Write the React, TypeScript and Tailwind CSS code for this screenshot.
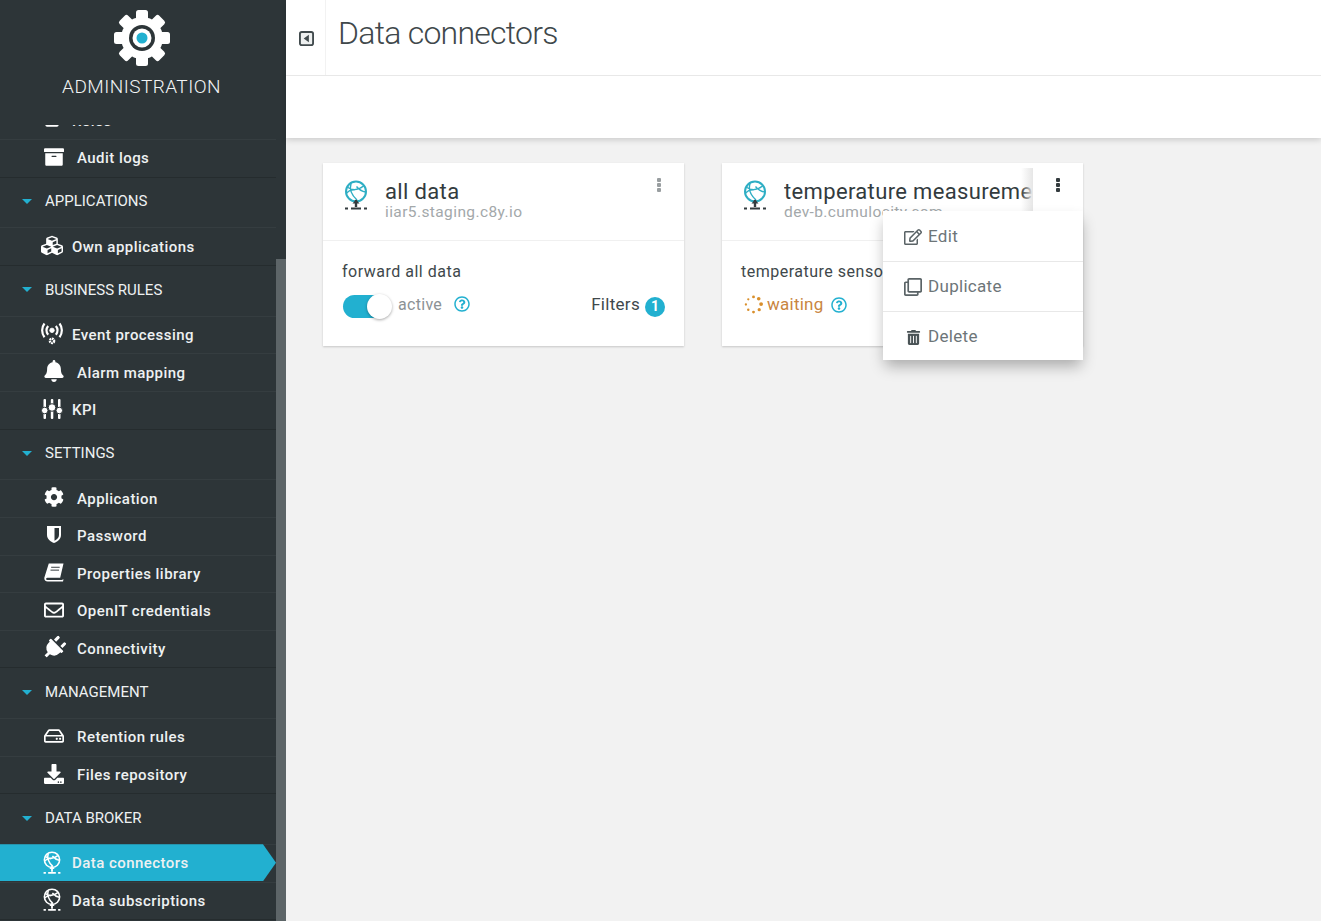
import React from 'react';
import {
  FaArchive,
  FaBell,
  FaCog,
  FaCubes,
  FaDownload,
  FaPlug,
  FaRegClone,
  FaRegEdit,
  FaRegEnvelope,
  FaRegHdd,
  FaRegQuestionCircle,
  FaTrashAlt,
  FaUsers,
} from 'react-icons/fa';

const GearLogo = () => (
  <svg viewBox="0 0 56 56" className="w-[56px] h-[56px]">
    <g fill="#fff">
      <circle cx="28" cy="28" r="21" />
      {[0, 45, 90, 135, 180, 225, 270, 315].map((a) => (
        <rect key={a} x="22" y="0" width="12" height="14" rx="2.5" transform={`rotate(${a} 28 28)`} />
      ))}
    </g>
    <circle cx="28" cy="28" r="13" fill="#2d3538" />
    <circle cx="28" cy="28" r="9.5" fill="#fff" />
    <circle cx="28" cy="28" r="5.5" fill="#22b0d0" />
  </svg>
);

const BrokerIcon = ({ className, color, base, weight = 1.4 }: { className?: string; color: string; base: string; weight?: number }) => (
  <svg viewBox="0 0 26 30" className={className} fill="none">
    <circle cx="13" cy="11.500" r="10" stroke={color} strokeWidth="2" />
    <path
      d="M4 7c5 3.500 11 3.500 16.500-1M8 3.500c-1.500 5 0 11 6 16.500M13.500 6.500c2.500 3 5.500 5 9 5.500M3.500 13c2-2 5-3.500 8-3"
      stroke={color}
      strokeWidth={weight}
    />
    <path d="M13 27v-7" stroke={base} strokeWidth="2.400" />
    <path d="M9.500 23.500 13 19.500l3.500 4z" fill={base} />
    <path d="M2 28.500h3M8 28.500h10M21 28.500h3" stroke={base} strokeWidth="2.200" />
  </svg>
);

const EventIcon = () => (
  <svg viewBox="0 0 24 24" className="w-[24px] h-[24px]" fill="none" stroke="#fff" strokeWidth="2.400">
    <circle cx="12" cy="8" r="2.400" fill="#fff" strokeWidth="1" />
    <path d="M7.800 12.800c-2.200-2.800-2.200-6.700 0-9.500M16.200 12.800c2.200-2.800 2.200-6.700 0-9.500" />
    <path d="M3.800 15.500C.4 11.200.4 4.800 3.800.5M20.200 15.500c3.400-4.300 3.400-10.700 0-15" />
    <circle cx="12" cy="19.500" r="2.300" strokeWidth="2.600" strokeDasharray="1.800 0.600" />
  </svg>
);

const KpiIcon = () => (
  <svg viewBox="0 0 22 20" className="w-[22px] h-[20px]" fill="#fff">
    <rect x="2.500" y="0" width="2.500" height="20" rx="1" />
    <rect x="9.800" y="0" width="2.500" height="20" rx="1" />
    <rect x="17" y="0" width="2.500" height="20" rx="1" />
    <circle cx="3.700" cy="11.500" r="3.300" stroke="#2d3538" />
    <circle cx="11" cy="8.500" r="3.800" stroke="#2d3538" />
    <circle cx="18.300" cy="11.500" r="3.300" stroke="#2d3538" />
  </svg>
);

const ShieldIcon = () => (
  <svg viewBox="0 0 16 19" className="w-[16px] h-[19px]">
    <path d="M1 1h14v9c0 4-3.500 6.700-7 8-3.500-1.300-7-4-7-8z" fill="#fff" />
    <path d="M8.500 3h4.500v7c0 2.700-2.300 4.700-4.500 5.700z" fill="#2d3538" />
  </svg>
);

const BookIcon = () => (
  <svg viewBox="0 0 21 20" className="w-[20px] h-[19px]">
    <path d="M5 .5h15.500L17 15.500H3.500c-1 0-1.500 1-1.200 1.700.3.700 1 .8 1.700.8h14.500l2-1-.5 2.500H4c-2.500 0-4-1.500-3.700-4z" fill="#fff" />
    <path d="M7.500 4.500h9M6.800 7.500h9" stroke="#2d3538" strokeWidth="1" />
  </svg>
);

const ToggleIcon = () => (
  <svg viewBox="0 0 16 16" className="w-[15px] h-[15px]">
    <rect x="1" y="1" width="14" height="14" rx="2" fill="#eef0f0" stroke="#414a4d" strokeWidth="2" />
    <path d="M10.500 4v8L5 8z" fill="#414a4d" />
  </svg>
);

const Spinner = () => (
  <svg viewBox="0 0 20 20" className="w-[19px] h-[19px]" fill="#d98f2b">
    <circle cx="10" cy="2" r="1.500" />
    <circle cx="15.500" cy="4" r="1.900" />
    <circle cx="18" cy="9.500" r="2" />
    <circle cx="16" cy="15.500" r="1.700" />
    <circle cx="10" cy="18" r="1.500" />
    <circle cx="4.500" cy="15.500" r="1.300" />
    <circle cx="2" cy="10" r="1.200" />
    <circle cx="4.500" cy="4.500" r="1.200" />
  </svg>
);

const Dots = ({ className }: { className: string }) => (
  <div className={`flex flex-col gap-[1px] ${className}`}>
    <span className="w-[4px] h-[4px] rounded-[1px] bg-current" />
    <span className="w-[4px] h-[4px] rounded-[1px] bg-current" />
    <span className="w-[4px] h-[4px] rounded-[1px] bg-current" />
  </div>
);

type Item = { label: string; icon: React.ReactNode; wide?: boolean; active?: boolean };

const ic = 'text-white text-[20px]';

const groups: { title: string; items: Item[] }[] = [
  {
    title: 'APPLICATIONS',
    items: [{ label: 'Own applications', icon: <FaCubes className="text-white text-[23px]" />, wide: true }],
  },
  {
    title: 'BUSINESS RULES',
    items: [
      { label: 'Event processing', icon: <EventIcon />, wide: true },
      { label: 'Alarm mapping', icon: <FaBell className="text-white text-[22px]" /> },
      { label: 'KPI', icon: <KpiIcon />, wide: true },
    ],
  },
  {
    title: 'SETTINGS',
    items: [
      { label: 'Application', icon: <FaCog className={ic} /> },
      { label: 'Password', icon: <ShieldIcon /> },
      { label: 'Properties library', icon: <BookIcon /> },
      { label: 'OpenIT credentials', icon: <FaRegEnvelope className="text-white text-[22px]" /> },
      { label: 'Connectivity', icon: <FaPlug className="text-white text-[24px] rotate-45" /> },
    ],
  },
  {
    title: 'MANAGEMENT',
    items: [
      { label: 'Retention rules', icon: <FaRegHdd className={ic} /> },
      { label: 'Files repository', icon: <FaDownload className={ic} /> },
    ],
  },
  {
    title: 'DATA BROKER',
    items: [
      {
        label: 'Data connectors',
        icon: <BrokerIcon className="w-[20px] h-[23px]" color="#fff" base="#fff" weight={2} />,
        wide: true,
        active: true,
      },
      {
        label: 'Data subscriptions',
        icon: <BrokerIcon className="w-[20px] h-[23px]" color="#fff" base="#fff" weight={2} />,
        wide: true,
      },
    ],
  },
];

const NavRow = ({ item, last }: { item: Item; last?: boolean }) => (
  <div
    className={`relative flex items-center h-[37.6px] border-b text-[15px] font-medium text-[#eef1f2] ${
      item.wide ? 'pl-[41px]' : 'pl-[44px]'
    } ${last ? 'border-[#252c2e]' : 'border-[#353d40]'}`}
  >
    {item.active && (
      <div className="absolute left-0 top-[-1px] w-[276px] h-[37px] bg-[#22b0d0] [clip-path:polygon(0_0,263px_0,276px_50%,263px_100%,0_100%)]" />
    )}
    <div className={`relative flex justify-center shrink-0 pb-[3px] ${item.wide ? 'w-[31px] pr-[9px]' : 'w-[33px] pr-[13px]'}`}>
      {item.icon}
    </div>
    <span className="relative tracking-[0.45px]">{item.label}</span>
  </div>
);

const Sidebar = () => (
  <aside className="w-[286px] h-full shrink-0 flex flex-col bg-[#2d3538] overflow-hidden">
    <div className="h-[125px] shrink-0 flex flex-col items-center pt-[10px] pr-[3px]">
      <GearLogo />
      <div className="mt-[9px] text-[19px] leading-[24px] tracking-[0.45px] font-light text-[#f2f4f5]">ADMINISTRATION</div>
    </div>
    <div className="flex flex-1 min-h-0">
      <nav className="flex-1 min-w-0 overflow-hidden">
        <div className="-mt-[22.5px]">
          <NavRow item={{ label: 'Roles', icon: <FaUsers className="text-white text-[22px]" />, wide: true }} />
          <NavRow item={{ label: 'Audit logs', icon: <FaArchive className={ic} /> }} last />
          {groups.map((group) => (
            <div key={group.title}>
              <div className="flex items-center h-[50.8px] pb-[2px] border-b border-[#353d40] text-[#eef1f2]">
                <span className="ml-[22px] w-0 h-0 border-x-[5px] border-x-transparent border-t-[5px] border-t-[#22b0d0]" />
                <span className="ml-[13px] text-[15px]">{group.title}</span>
              </div>
              {group.items.map((item, index) => (
                <NavRow key={item.label} item={item} last={index === group.items.length - 1} />
              ))}
            </div>
          ))}
        </div>
      </nav>
      <div className="w-[10px] shrink-0 pt-[134px]">
        <div className="h-full bg-[#5d6568]" />
      </div>
    </div>
  </aside>
);

const Question = ({ className }: { className?: string }) => (
  <FaRegQuestionCircle className={`text-[16px] text-[#22b0d0] ${className}`} />
);

const Toggle = () => (
  <div className="relative w-[49px] h-[23px] ml-[1px]">
    <div className="w-[40px] h-[23px] rounded-full bg-[#22b0d0]" />
    <div className="absolute right-0 top-[-1px] w-[25px] h-[25px] rounded-full bg-white shadow-[0_1px_3px_rgba(0,0,0,0.35)]" />
  </div>
);

const Card = ({ children }: { children: React.ReactNode }) => (
  <div className="relative w-[361px] h-[183px] bg-white shadow-[0_1px_2px_rgba(0,0,0,0.18)]">{children}</div>
);

const CardHead = ({ title, host, dots }: { title: string; host: string; dots: string }) => (
  <div className="flex h-[78px] border-b border-[#f0f0f0] pl-[20px]">
    <BrokerIcon className="w-[26px] h-[30px] mt-[17px] shrink-0" color="#2eaec4" base="#333b3e" />
    <div className="ml-[16px] mt-[15px] w-[248px] min-w-0">
      <div className="text-[22px] leading-[28px] tracking-[0.35px] text-[#333b3e] whitespace-nowrap overflow-hidden">{title}</div>
      <div className="text-[15.5px] leading-[13px] tracking-[0.4px] text-[#a3a8aa] whitespace-nowrap">{host}</div>
    </div>
    <Dots className={`absolute top-[15px] right-[23px] ${dots}`} />
  </div>
);

const MENU = [
  { label: 'Edit', icon: <FaRegEdit className="text-[18px] text-[#5a6366]" /> },
  { label: 'Duplicate', icon: <FaRegClone className="text-[18px] text-[#5a6366]" /> },
  { label: 'Delete', icon: <FaTrashAlt className="text-[15px] text-[#4a5356] ml-[2px] mr-[1px]" /> },
];

const Dropdown = () => (
  <div className="absolute left-[161px] top-[48px] w-[200px] bg-white shadow-[0_8px_14px_-2px_rgba(0,0,0,0.3)]">
    {MENU.map((item, index) => (
      <div
        key={item.label}
        className={`flex items-center gap-[6px] pl-[21px] text-[17px] tracking-[0.3px] text-[#6d7578] ${
          index === 0 ? 'h-[51px] pt-[2px]' : index === 1 ? 'h-[50px]' : 'h-[48px] pt-[2px]'
        } ${index < 2 ? 'border-b border-[#e8e8e8]' : ''}`}
      >
        {item.icon}
        <span>{item.label}</span>
      </div>
    ))}
  </div>
);

const App = () => (
  <div className="flex h-screen w-full overflow-hidden bg-[#f2f2f2] [font-family:Roboto,sans-serif]">
    <Sidebar />
    <main className="flex-1 min-w-0">
      <div className="bg-white shadow-[0_2px_6px_rgba(0,0,0,0.16)]">
        <div className="flex h-[76px] border-b border-[#e8e8e8]">
          <div className="w-[40px] flex items-center justify-center border-r border-[#f2f2f2] pt-[2px] pl-[1px]">
            <ToggleIcon />
          </div>
          <h1 className="ml-[12px] mt-[13px] text-[32px] leading-[40px] font-light tracking-[-0.75px] text-[#40484b]">Data connectors</h1>
        </div>
        <div className="h-[62px]" />
      </div>
      <div className="flex gap-[38px] pl-[37px] pt-[25px]">
        <Card>
          <CardHead title="all data" host="iiar5.staging.c8y.io" dots="text-[#999ea0]" />
          <div className="px-[19px] pt-[21px]">
            <div className="text-[16px] leading-[20px] tracking-[0.5px] text-[#40484b]">forward all data</div>
            <div className="flex items-center mt-[10px]">
              <Toggle />
              <span className="ml-[6px] pb-[4px] text-[16px] tracking-[0.3px] text-[#8c9295]">active</span>
              <Question className="ml-[12px] mb-[5px]" />
              <span className="ml-auto pb-[4px] text-[17px] tracking-[0.3px] text-[#40484b]">Filters</span>
              <span className="ml-[5px] flex items-center justify-center w-[20px] h-[20px] rounded-full bg-[#22b0d0] text-[14px] font-bold text-white">
                1
              </span>
            </div>
          </div>
        </Card>
        <Card>
          <CardHead title="temperature measurement" host="dev-b.cumulocity.com" dots="text-[#333b3e]" />
          <div className="absolute right-[50px] top-[5px] w-[12px] h-[43px] bg-gradient-to-r from-transparent to-[#e6e6e6]" />
          <div className="px-[19px] pt-[21px]">
            <div className="text-[16px] leading-[20px] tracking-[0.5px] text-[#40484b] whitespace-nowrap">temperature sensor</div>
            <div className="flex items-center h-[21px] mt-[12px] pl-[3px]">
              <Spinner />
              <span className="ml-[4px] text-[17px] tracking-[0.25px] text-[#c9853f]">waiting</span>
              <Question className="ml-[7px]" />
            </div>
          </div>
          <Dropdown />
        </Card>
      </div>
    </main>
  </div>
);

export default App;
